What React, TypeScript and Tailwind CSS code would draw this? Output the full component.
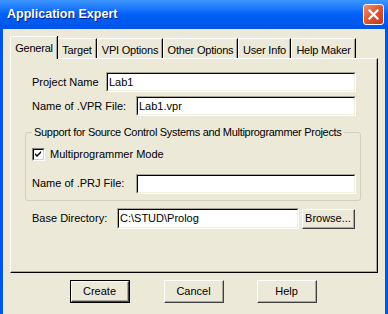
import React from 'react';

const font = { fontFamily: '"Liberation Sans", Arial, sans-serif' };

// sunken text field, classic two-line edge
function Field({ width, value, height = 20 }: { width: number; value?: string; height?: number }) {
  return (
    <div
      className="border border-t-[#ACA899] border-l-[#ACA899] border-b-white border-r-white"
      style={{ width, height }}
    >
      <div className="h-full border border-t-black border-l-black border-b-[#F1EFE2] border-r-[#F1EFE2] bg-white pl-[1px] text-[11px] leading-[16px] text-black">
        {value}
      </div>
    </div>
  );
}

function Button({ label, width = 60, height = 23, isDefault = false }: { label: string; width?: number; height?: number; isDefault?: boolean }) {
  return (
    <div style={{ width, height }} className={isDefault ? 'border border-black' : ''}>
      <div className="h-full border border-t-white border-l-white border-b-[#404040] border-r-[#404040]">
        <div className="flex h-full items-center justify-center border-b border-r border-[#ACA899] bg-[#ECE9D8] text-[11px] text-black">
          {label}
        </div>
      </div>
    </div>
  );
}

const tabs = [
  { label: 'Target', w: 40 },
  { label: 'VPI Options', w: 66 },
  { label: 'Other Options', w: 75 },
  { label: 'User Info', w: 53 },
  { label: 'Help Maker', w: 65 },
];

export default function App() {
  return (
    <div className="flex h-[314px] w-[388px] flex-col overflow-hidden bg-[#0055EA]" style={font}>
      {/* Title bar */}
      <div className="flex h-[29px] shrink-0 items-center justify-between bg-gradient-to-b from-[#3D95FF] via-[#0060F8] to-[#0054E8] pl-[7px] pr-[4px]">
        <span className="text-[12.5px] font-bold text-white [text-shadow:1px_1px_0_#0A1E8C]">
          Application Expert
        </span>
        <div className="flex h-[21px] w-[21px] items-center justify-center rounded-[3px] border border-white bg-gradient-to-br from-[#F08C6C] via-[#E0552F] to-[#C0381A]">
          <svg width="11" height="11" viewBox="0 0 11 11">
            <path d="M1.5 1.5 L9.5 9.5 M9.5 1.5 L1.5 9.5" stroke="white" strokeWidth="2.2" strokeLinecap="square" />
          </svg>
        </div>
      </div>

      <div className="flex flex-1">
        <div className="w-[3px] bg-[#0055EA]" />
        <div className="flex flex-1 flex-col bg-[#ECE9D8] pl-[7px] pr-[7px] pt-[7px] text-[11px] text-black">
          {/* Tab strip */}
          <div className="flex h-[22px] items-end tracking-[-0.2px]">
            <div className="relative z-10 -mb-[1px] flex h-[23px] w-[47px] items-start justify-center rounded-tl-[2px] border-l border-t border-white bg-[#ECE9D8] pt-[3px] [box-shadow:1px_0_0_#000,inset_-1px_0_0_#ACA899]">
              General
            </div>
            {tabs.map((t) => (
              <div
                key={t.label}
                style={{ width: t.w }}
                className="flex h-[20px] items-start justify-center rounded-tl-[2px] border-l border-t border-r border-l-white border-t-white border-r-black pt-[3px] shadow-[inset_-1px_0_0_#ACA899]"
              >
                {t.label}
              </div>
            ))}
          </div>

          {/* Tab panel */}
          <div className="h-[215px] w-[368px] border border-t-white border-l-white border-b-black border-r-black pl-[21px] pt-[13px] shadow-[inset_-1px_-1px_0_#ACA899]">
            <div className="flex items-center">
              <span className="w-[74px]">Project Name</span>
              <Field width={250} value="Lab1" />
            </div>
            <div className="mt-[4px] flex items-center">
              <span className="w-[104px]">Name of .VPR File:</span>
              <Field width={220} value="Lab1.vpr" />
            </div>

            {/* Group box */}
            <div className="relative -ml-[7px] mt-[16px] h-[69px] w-[336px] rounded-[3px] border border-[#D0D0BF] pl-[6px] pt-[13px]">
              <span className="absolute -top-[7px] left-[6px] whitespace-nowrap bg-[#ECE9D8] px-[2px] leading-[13px] tracking-[-0.3px]">
                Support for Source Control Systems and Multiprogrammer Projects
              </span>
              <div className="flex items-center">
                <div className="h-[13px] w-[13px] border border-t-[#808080] border-l-[#808080] border-b-white border-r-white">
                  <div className="flex h-full items-center justify-center border border-t-black border-l-black border-b-[#D4D0C8] border-r-[#D4D0C8] bg-white">
                    <svg width="7" height="7" viewBox="0 0 7 7">
                      <path d="M0 2 L2 4 L6 0 L6 2 L2 6 L0 4 Z" fill="black" />
                    </svg>
                  </div>
                </div>
                <span className="ml-[5px]">Multiprogrammer Mode</span>
              </div>
              <div className="mt-[11px] flex items-center">
                <span className="w-[104px]">Name of .PRJ File:</span>
                <Field width={220} />
              </div>
            </div>

            <div className="mt-[7px] flex items-center">
              <span className="w-[85px]">Base Directory:</span>
              <Field width={182} height={21} value="C:\STUD\Prolog" />
              <div className="ml-[3px]">
                <Button label="Browse..." width={53} height={20} />
              </div>
            </div>
          </div>

          {/* Dialog buttons */}
          <div className="mt-[7px] flex pl-[60px]">
            <Button label="Create" isDefault />
            <div className="ml-[34px]">
              <Button label="Cancel" />
            </div>
            <div className="ml-[33px]">
              <Button label="Help" />
            </div>
          </div>
        </div>
        <div className="w-[3px] bg-[#0055EA]" />
      </div>
    </div>
  );
}
